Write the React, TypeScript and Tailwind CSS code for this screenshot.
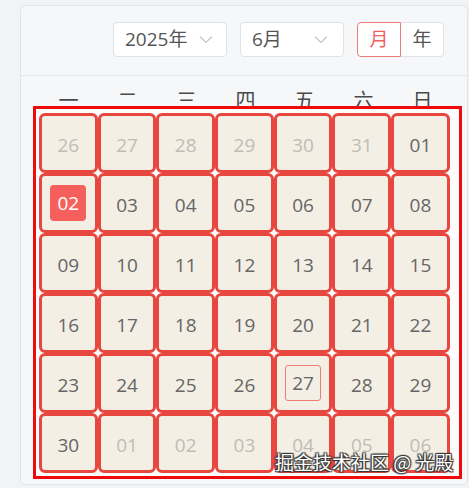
import React from "react";

const font = { fontFamily: '"Open Sans", "Noto Sans CJK SC", sans-serif' };

function Chevron() {
  return (
    <svg width="14" height="9" viewBox="0 0 14 9" fill="none">
      <path d="M1 1.5 L7 7.5 L13 1.5" stroke="#c0c4cc" strokeWidth="1.2" />
    </svg>
  );
}

type Cell = { d: string; other?: boolean; sel?: boolean; today?: boolean };

const rows: Cell[][] = [
  [
    { d: "26", other: true },
    { d: "27", other: true },
    { d: "28", other: true },
    { d: "29", other: true },
    { d: "30", other: true },
    { d: "31", other: true },
    { d: "01" },
  ],
  [{ d: "02", sel: true }, { d: "03" }, { d: "04" }, { d: "05" }, { d: "06" }, { d: "07" }, { d: "08" }],
  [{ d: "09" }, { d: "10" }, { d: "11" }, { d: "12" }, { d: "13" }, { d: "14" }, { d: "15" }],
  [{ d: "16" }, { d: "17" }, { d: "18" }, { d: "19" }, { d: "20" }, { d: "21" }, { d: "22" }],
  [{ d: "23" }, { d: "24" }, { d: "25" }, { d: "26" }, { d: "27", today: true }, { d: "28" }, { d: "29" }],
  [
    { d: "30" },
    { d: "01", other: true },
    { d: "02", other: true },
    { d: "03", other: true },
    { d: "04", other: true },
    { d: "05", other: true },
    { d: "06", other: true },
  ],
];

const weekdays = ["一", "二", "三", "四", "五", "六", "日"];

export default function App() {
  return (
    <div className="w-[469px] h-[488px] bg-[#f2f3f6] pt-[5px] pl-[20px] overflow-hidden relative" style={font}>
      <div className="w-[448px] h-[480px] bg-[#f6f7f9] border border-[#e2e4ea] rounded-[5px]">
        <div className="h-[70px] border-b border-[#e2e4ea] flex justify-end items-start pt-[16px] pr-[23px] gap-[13px]">
          <div className="w-[114px] h-[35px] bg-white border border-[#dfe2e8] rounded-[4px] flex items-center pl-[11px] pr-[13px] justify-between">
            <span className="text-[19px] text-[#555] leading-none">2025年</span>
            <Chevron />
          </div>
          <div className="w-[104px] h-[35px] bg-white border border-[#dfe2e8] rounded-[4px] flex items-center pl-[11px] pr-[15px] justify-between">
            <span className="text-[19px] text-[#555] leading-none">6月</span>
            <Chevron />
          </div>
          <div className="flex h-[35px]">
            <div className="w-[44px] h-[35px] border border-[#f07a7a] rounded-l-[4px] bg-white flex items-center justify-center text-[19px] text-[#f0605e] leading-none">
              月
            </div>
            <div className="w-[43px] h-[35px] border border-l-0 border-[#dfe2e8] rounded-r-[4px] bg-white flex items-center justify-center text-[19px] text-[#555] leading-none">
              年
            </div>
          </div>
        </div>

        <div className="mt-[13px] pl-[18px] grid grid-cols-[repeat(7,59px)] h-[24px]">
          {weekdays.map((w) => (
            <div key={w} className="text-center text-[20px] leading-[24px] text-[#4a4a4a]">
              {w}
            </div>
          ))}
        </div>

        <div className="relative z-10 -mt-[7px] ml-[12px] w-[429px] h-[373px] border-[3px] border-[#ee0b0b] bg-[#fcfcfd] pt-[4px] pl-[3px]">
          <div className="grid grid-cols-[repeat(7,58.7px)] grid-rows-[repeat(6,60px)]">
            {rows.flat().map((c, i) => (
              <div
                key={i}
                className="border-[3px] border-[#e8473f] rounded-[6px] bg-[#f4efe5] flex items-center justify-center"
              >
                {c.sel ? (
                  <div className="w-[36px] h-[36px] rounded-[4px] bg-[#f5605c] text-white flex items-center justify-center text-[19px]">
                    {c.d}
                  </div>
                ) : c.today ? (
                  <div className="w-[36px] h-[36px] rounded-[3px] border border-[#f27b78] text-[#666] flex items-center justify-center text-[19px]">
                    {c.d}
                  </div>
                ) : (
                  <span className={"text-[19px] translate-y-[2px] " + (c.other ? "text-[#c0bcb4]" : "text-[#666]")}>
                    {c.d}
                  </span>
                )}
              </div>
            ))}
          </div>
        </div>
      </div>

      <div
        className="absolute left-[275px] top-[449px] z-20 text-[19px] text-white leading-[26px] whitespace-nowrap"
        style={{
          fontFamily: '"Noto Sans CJK SC", sans-serif',
          textShadow: "0 0 1px #333, 1px 1px 1px #333, -1px -1px 1px #333, 1px -1px 1px #333, -1px 1px 1px #333",
        }}
      >
        掘金技术社区 @ 光殿
      </div>
    </div>
  );
}
